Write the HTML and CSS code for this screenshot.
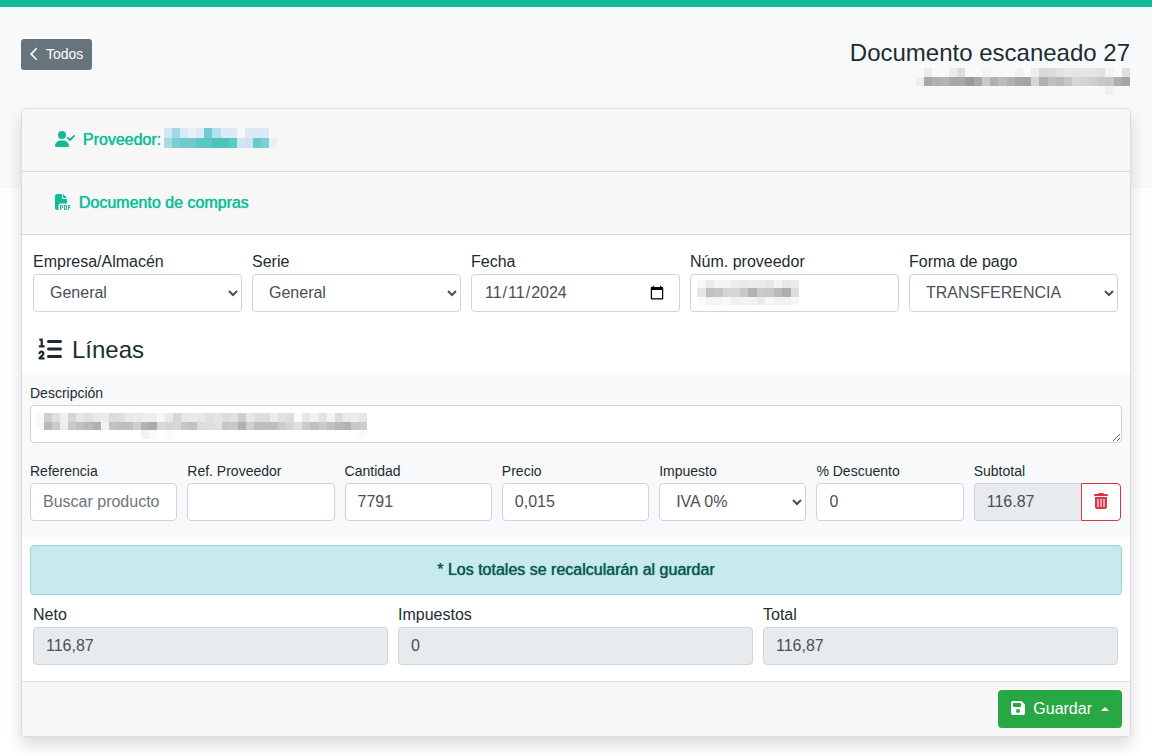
FILE: index.html
```
<!DOCTYPE html>
<html lang="es">
<head>
<meta charset="utf-8">
<title>Documento escaneado 27</title>
<link rel="stylesheet" href="styles.css">
</head>
<body>
<header class="hero">
  <button class="btn btn-back" type="button">
    <svg class="icon icon-angle" viewBox="0 0 320 512" aria-hidden="true"><path d="M9.4 233.4c-12.5 12.5-12.5 32.8 0 45.3l192 192c12.5 12.5 32.8 12.5 45.3 0s12.5-32.8 0-45.3L77.3 256 246.6 86.6c12.5-12.5 12.5-32.8 0-45.3s-32.8-12.5-45.3 0l-192 192z"/></svg>
    Todos
  </button>
  <div class="hero-title">
    <h1 class="title">Documento escaneado 27</h1>
    <svg class="mosaic mosaic-file" data-rows="-- ec f8 -- ec dd -- -- f3 f7 f8 -- f2 -- ec d9 da e2 e8 e4 e4 e4 e0 f2 -- dd|ee a8 b0 b4 a8 a8 9b a9 c9 b0 bc b0 a7 a5 d5 b0 bf ba c6 d6 d4 ce c8 c6 ae a5|-- -- -- -- -- -- -- -- -- -- -- -- -- -- -- -- -- -- -- -- -- -- -- f0 f8 --"></svg>
  </div>
</header>

<form class="card">
  <div class="card-header">
    <a class="section-link" href="#proveedor">
      <svg class="icon icon-user" viewBox="0 0 640 512" aria-hidden="true"><path d="M96 128a128 128 0 1 1 256 0A128 128 0 1 1 96 128zM0 482.3C0 383.8 79.8 304 178.3 304h91.4C368.2 304 448 383.8 448 482.3c0 16.4-13.3 29.7-29.7 29.7H29.7C13.3 512 0 498.7 0 482.3z"/><path class="icon-check" d="M625 177L497 305c-9.4 9.4-24.6 9.4-33.9 0l-64-64c-9.4-9.4-9.4-24.6 0-33.9s24.6-9.4 33.9 0l47 47L591 143c9.4-9.4 24.6-9.4 33.9 0s9.4 24.6 0 33.9z"/></svg>
      <span>Proveedor:</span>
      <svg class="mosaic mosaic-supplier" data-rows="cde7f4 a0d8e4 dceaf6 ebf0f7 dceaf6 70cccc b8e0ec dceaf6 dceaf6 f6f7f9 dceaf6 dceaf6 dceaf6 --|a8dae4 78ced0 70cccc 70cccc 5cc8c4 5cc8c4 4cc4bc 4cc4bc 5cc8c4 cde5f4 cde3f2 68cacc 7ccfd3 ebf0f7"></svg>
    </a>
  </div>
  <div class="card-header">
    <a class="section-link" href="#documento">
      <svg class="icon icon-16" viewBox="0 0 512 512" aria-hidden="true"><path d="M0 64C0 28.7 28.7 0 64 0H224V128c0 17.7 14.3 32 32 32H384V304H176c-35.3 0-64 28.7-64 64V512H64c-35.3 0-64-28.7-64-64V64zm384 64H256V0L384 128zM176 352h32c30.9 0 56 25.1 56 56s-25.1 56-56 56H192v32c0 8.8-7.2 16-16 16s-16-7.2-16-16V448 368c0-8.8 7.2-16 16-16zm32 80c13.3 0 24-10.7 24-24s-10.7-24-24-24H192v48h16zm96-80h32c26.5 0 48 21.5 48 48v64c0 26.5-21.5 48-48 48H304c-8.8 0-16-7.2-16-16V368c0-8.8 7.2-16 16-16zm32 128c8.8 0 16-7.2 16-16V400c0-8.8-7.2-16-16-16H320v96h16zm80-112c0-8.8 7.2-16 16-16h48c8.8 0 16 7.2 16 16s-7.2 16-16 16H448v32h32c8.8 0 16 7.2 16 16s-7.2 16-16 16H448v48c0 8.8-7.2 16-16 16s-16-7.2-16-16V432 368z"/></svg>
      <span>Documento de compras</span>
    </a>
  </div>

  <div class="grid grid-document">
    <div class="field">
      <label for="almacen">Empresa/Almacén</label>
      <select class="control" id="almacen"><option>General</option></select>
    </div>
    <div class="field">
      <label for="serie">Serie</label>
      <select class="control" id="serie"><option>General</option></select>
    </div>
    <div class="field">
      <label for="fecha">Fecha</label>
      <input class="control" id="fecha" type="date" value="2024-11-11">
    </div>
    <div class="field">
      <label for="numproveedor">Núm. proveedor</label>
      <div class="masked">
        <input class="control" id="numproveedor" type="text">
        <svg class="mosaic mosaic-number" data-rows="f7 ea f4 f5 eb e9 eb eb e6 f4 e7 eb|e5 bf c6 d4 d5 c8 b1 ca c8 bb ae dc|fa f5 f5 f9 f1 f3 f3 ea f6 f2 f2 f7"></svg>
      </div>
    </div>
    <div class="field">
      <label for="formapago">Forma de pago</label>
      <select class="control" id="formapago"><option>TRANSFERENCIA</option></select>
    </div>
  </div>

  <h2 class="lines-title">
    <svg class="icon icon-24" viewBox="0 0 512 512" aria-hidden="true"><path d="M24 56c0-13.3 10.7-24 24-24H80c13.3 0 24 10.7 24 24V176h16c13.3 0 24 10.7 24 24s-10.7 24-24 24H40c-13.3 0-24-10.7-24-24s10.7-24 24-24H56V80H48C34.7 80 24 69.3 24 56zM86.7 341.2c-6.5-7.4-18.3-6.9-24 1.2L51.5 357.9c-7.7 10.8-22.7 13.3-33.5 5.6s-13.3-22.7-5.6-33.5l11.1-15.6c23.7-33.2 72.3-35.6 99.2-4.9c21.3 24.4 20.8 60.9-1.1 84.7L86.8 432H120c13.3 0 24 10.7 24 24s-10.7 24-24 24H32c-9.5 0-18.2-5.6-22-14.4s-2.1-18.9 4.3-25.9l72-78c5.3-5.8 5.4-14.6 .3-20.5zM224 64H480c17.7 0 32 14.3 32 32s-14.3 32-32 32H224c-17.7 0-32-14.3-32-32s14.3-32 32-32zm0 160H480c17.7 0 32 14.3 32 32s-14.3 32-32 32H224c-17.7 0-32-14.3-32-32s14.3-32 32-32zm0 160H480c17.7 0 32 14.3 32 32s-14.3 32-32 32H224c-17.7 0-32-14.3-32-32s14.3-32 32-32z"/></svg>
    Líneas
  </h2>

  <section class="line">
    <div class="field">
      <label for="descripcion">Descripción</label>
      <div class="masked">
        <textarea class="control" id="descripcion" rows="1"></textarea>
        <svg class="mosaic mosaic-description" data-rows="f9 cf df ef d5 e6 e1 ea ec dc df e9 eb ee ee f7 ea d7 e6 ea e8 e1 e4 dc e1 cd e6 df dc ec e2 dc fa e6 f0 e3 f3 dc ea ec e5|f9 ba cb ee c9 c0 b9 b1 f2 c2 be bf cf b3 aa d9 d6 d7 c6 c1 dc df e1 c5 c9 b0 ce bd c0 be cc d5 e1 cb c0 ca c1 b8 b3 c8 cc|-- -- -- -- -- -- -- -- -- -- -- -- -- f2 f9 -- f9 -- -- -- -- -- -- -- -- -- -- -- -- -- -- -- -- -- -- -- -- -- -- -- f9"></svg>
      </div>
    </div>
    <div class="grid grid-line">
      <div class="field">
        <label for="referencia">Referencia</label>
        <input class="control" id="referencia" type="text" placeholder="Buscar producto">
      </div>
      <div class="field">
        <label for="refproveedor">Ref. Proveedor</label>
        <input class="control" id="refproveedor" type="text">
      </div>
      <div class="field">
        <label for="cantidad">Cantidad</label>
        <input class="control" id="cantidad" type="text" value="7791">
      </div>
      <div class="field">
        <label for="precio">Precio</label>
        <input class="control" id="precio" type="text" value="0,015">
      </div>
      <div class="field">
        <label for="impuesto">Impuesto</label>
        <select class="control" id="impuesto"><option>IVA 0%</option></select>
      </div>
      <div class="field">
        <label for="descuento">% Descuento</label>
        <input class="control" id="descuento" type="text" value="0">
      </div>
      <div class="field">
        <label for="subtotal">Subtotal</label>
        <div class="input-group">
          <input class="control" id="subtotal" type="text" value="116.87" readonly>
          <button class="btn btn-delete" type="button" aria-label="Eliminar">
            <svg class="icon icon-trash" viewBox="0 0 448 512" aria-hidden="true"><path d="M135.2 17.7L128 32H32C14.3 32 0 46.3 0 64S14.3 96 32 96H416c17.7 0 32-14.3 32-32s-14.3-32-32-32H320l-7.2-14.3C307.4 6.8 296.3 0 284.2 0H163.8c-12.1 0-23.2 6.8-28.6 17.7z"/><path d="M32 128V448c0 35.3 28.7 64 64 64H352c35.3 0 64-28.7 64-64V128z"/><path class="icon-slots" d="M96 192h64v256H96zM192 192h64v256h-64zM288 192h64v256h-64z"/></svg>
          </button>
        </div>
      </div>
    </div>
  </section>

  <p class="alert">* Los totales se recalcularán al guardar</p>

  <div class="grid grid-totals">
    <div class="field">
      <label for="neto">Neto</label>
      <input class="control" id="neto" type="text" value="116,87" readonly>
    </div>
    <div class="field">
      <label for="impuestos">Impuestos</label>
      <input class="control" id="impuestos" type="text" value="0" readonly>
    </div>
    <div class="field">
      <label for="total">Total</label>
      <input class="control" id="total" type="text" value="116,87" readonly>
    </div>
  </div>

  <div class="card-footer">
    <button class="btn btn-save" type="button">
      <svg class="icon icon-save" viewBox="0 0 448 512" aria-hidden="true"><path d="M64 32C28.7 32 0 60.7 0 96V416c0 35.3 28.7 64 64 64H384c35.3 0 64-28.7 64-64V173.3c0-17-6.7-33.3-18.7-45.3L352 50.7C340 38.7 323.7 32 306.7 32H64zm0 96c0-17.7 14.3-32 32-32H288c17.7 0 32 14.3 32 32v64c0 17.7-14.3 32-32 32H96c-17.7 0-32-14.3-32-32V128zM224 288a64 64 0 1 1 0 128 64 64 0 1 1 0-128z"/></svg>
      Guardar
      <span class="caret"></span>
    </button>
  </div>
</form>
<script src="mosaic.js"></script>
</body>
</html>
```

FILE: styles.css
```
* {
  box-sizing: border-box;
}

body {
  margin: 0;
  border-top: 7px solid #11bb98;
  background: #fff;
  color: #1d2d2f;
  font: 16px/24px "Liberation Sans", Arial, sans-serif;
}

svg {
  display: block;
  flex: none;
  fill: currentColor;
}

.hero {
  display: flex;
  justify-content: space-between;
  align-items: flex-start;
  padding: 32px 22px 93px 21px;
  background: #f8f9fb;
}

.hero-title {
  display: flex;
  flex-direction: column;
  align-items: flex-end;
  gap: 2px;
}

.title,
.lines-title {
  margin: 0;
  font-size: 24px;
  line-height: 27px;
  font-weight: 400;
}

.btn {
  display: flex;
  align-items: center;
  border: 1px solid transparent;
  border-radius: 4px;
  font: inherit;
  cursor: pointer;
}

.btn-back {
  gap: 7px;
  padding: 4px 8px;
  border-radius: 3px;
  background: #68747c;
  color: #fff;
  font-size: 14px;
  line-height: 21px;
}

.card {
  margin: -80px 21px 18px;
  border: 1px solid #dcdddf;
  border-radius: 4px;
  background: #fff;
  box-shadow: 0 8px 16px rgba(0, 0, 0, .15);
}

.card-header {
  padding: 12px 20px;
  border-bottom: 1px solid #d9dadb;
  border-radius: 3px 3px 0 0;
  background: #f7f7f7;
}

.section-link {
  display: flex;
  align-items: center;
  gap: 8px;
  padding: 7px 13px;
  color: #11bb98;
  text-decoration: none;
  text-shadow: 0 0 1px currentColor;
}

.grid {
  display: grid;
  gap: 10px;
}

.grid-document {
  grid-template-columns: repeat(5, 1fr);
  padding: 15px 12px 0 11px;
}

.grid-line {
  grid-template-columns: repeat(7, 1fr);
  margin-top: 16px;
  padding-right: 1px;
}

.grid-totals {
  grid-template-columns: repeat(3, 1fr);
  padding: 8px 12px 16px 11px;
}

.field {
  display: flex;
  flex-direction: column;
  min-width: 0;
}

.control {
  display: block;
  width: 100%;
  min-width: 0;
  height: 38px;
  margin: 0;
  padding: 6px 12px;
  border: 1px solid #ced4da;
  border-radius: 4px;
  background: #fff;
  color: #495057;
  font: inherit;
}

.control::placeholder {
  color: #6c757d;
}

.control[readonly] {
  background: #e8ebee;
}

select.control {
  padding: 5px 12px 7px;
}

textarea.control {
  min-height: 38px;
  overflow: hidden;
  resize: vertical;
}

.masked {
  position: relative;
}

.mosaic {
  shape-rendering: crispEdges;
}

.mosaic-file {
  width: 214px;
  height: 27px;
}

.mosaic-supplier {
  width: 113px;
  height: 20px;
  margin: 0 0 4px -5px;
}

.mosaic-number {
  position: absolute;
  top: 6px;
  left: 7px;
  width: 102px;
  height: 25px;
}

.mosaic-description {
  position: absolute;
  top: 8px;
  left: 6px;
  width: 331px;
  height: 26px;
}

.lines-title {
  display: flex;
  align-items: center;
  gap: 10px;
  padding: 24px 16px 10px;
}

.line {
  padding: 8px 8px 16px;
  background: #f8f9fb;
}

.line label {
  font-size: 14px;
}

.input-group {
  display: flex;
}

.input-group .control {
  flex: 1;
  border-right: 0;
  border-radius: 4px 0 0 4px;
}

.btn-delete {
  flex: none;
  padding: 0 12px;
  border-color: #dc3545;
  border-radius: 0 4px 4px 0;
  background: #fff;
  color: #dc3545;
}

.alert {
  margin: 8px 8px 0;
  padding: 12px;
  border: 1px solid #93d9d4;
  border-radius: 4px;
  background: #c8e9ed;
  color: #07594b;
  text-align: center;
  text-shadow: 0 0 1px currentColor;
}

.card-footer {
  display: flex;
  justify-content: flex-end;
  padding: 8px;
  border-top: 1px solid #dcdddf;
  border-radius: 0 0 3px 3px;
  background: #f7f7f7;
}

.btn-save {
  gap: 8px;
  padding: 6px 12px;
  background: #28a745;
  color: #fff;
}

.caret {
  margin-left: 1px;
  border: 4px solid transparent;
  border-top: 0;
  border-bottom-color: currentColor;
}

.icon {
  height: 16px;
  margin-bottom: 2px;
}

.icon-angle {
  width: 9px;
  height: 14px;
}

.icon-user {
  width: 20px;
}

.icon-check {
  stroke: currentColor;
  stroke-width: 24;
}

.icon-16 {
  width: 16px;
}

.icon-24 {
  width: 24px;
  height: 24px;
}

.icon-trash {
  width: 14px;
}

.icon-slots {
  fill: #f0a3ab;
}

.icon-save {
  width: 14px;
}
```

FILE: mosaic.js
```
// Fills each .mosaic with its colour cells: rows split by "|", "--" is an empty cell,
// a two-digit value is a shade of grey.
document.querySelectorAll('.mosaic').forEach(function (svg) {
  var rows = svg.dataset.rows.split('|').map(function (row) {
    return row.split(' ');
  });
  svg.setAttribute('viewBox', '0 0 ' + rows[0].length + ' ' + rows.length);
  svg.setAttribute('preserveAspectRatio', 'none');
  svg.setAttribute('aria-hidden', 'true');
  rows.forEach(function (cells, y) {
    cells.forEach(function (cell, x) {
      if (cell === '--') return;
      var rect = document.createElementNS('http://www.w3.org/2000/svg', 'rect');
      rect.setAttribute('x', x);
      rect.setAttribute('y', y);
      rect.setAttribute('width', 1);
      rect.setAttribute('height', 1);
      rect.setAttribute('fill', '#' + (cell.length === 2 ? cell + cell + cell : cell));
      svg.appendChild(rect);
    });
  });
});
```
